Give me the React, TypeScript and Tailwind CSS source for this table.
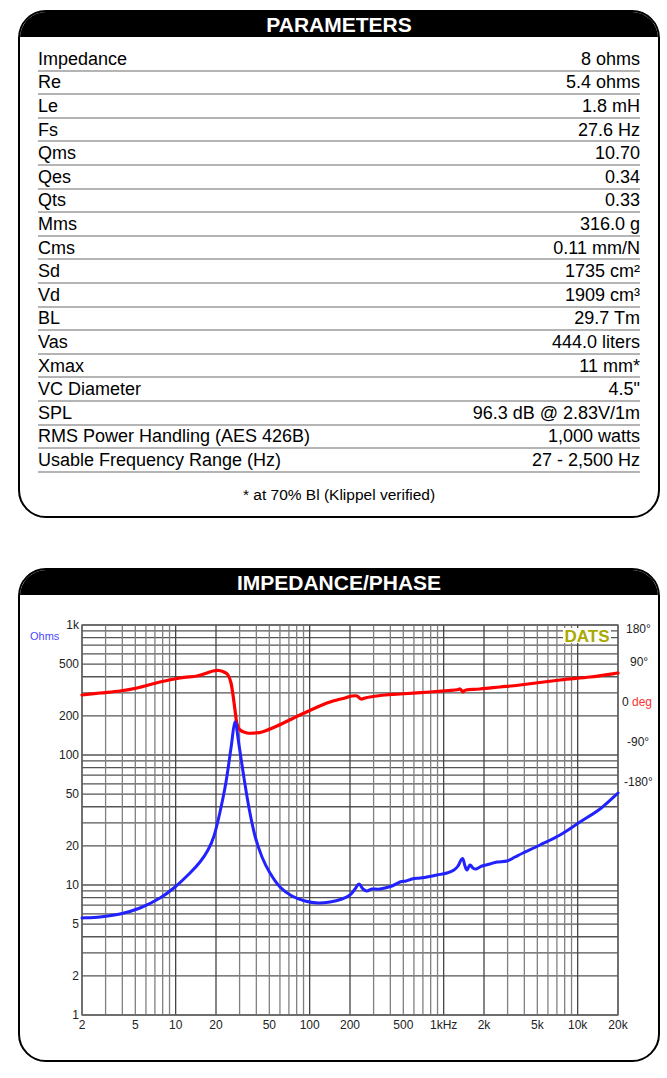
import React from "react";

const rows: [string, string][] = [
  ["Impedance", "8 ohms"],
  ["Re", "5.4 ohms"],
  ["Le", "1.8 mH"],
  ["Fs", "27.6 Hz"],
  ["Qms", "10.70"],
  ["Qes", "0.34"],
  ["Qts", "0.33"],
  ["Mms", "316.0 g"],
  ["Cms", "0.11 mm/N"],
  ["Sd", "1735 cm²"],
  ["Vd", "1909 cm³"],
  ["BL", "29.7 Tm"],
  ["Vas", "444.0 liters"],
  ["Xmax", "11 mm*"],
  ["VC Diameter", "4.5\""],
  ["SPL", "96.3 dB @ 2.83V/1m"],
  ["RMS Power Handling (AES 426B)", "1,000 watts"],
  ["Usable Frequency Range (Hz)", "27 - 2,500 Hz"],
];

// plot area in page pixels: x 82..618 (2 Hz..20 kHz), y 625..1015 (1k..1 ohm)
const fx = (f: number) => 82 + 134 * Math.log10(f / 2);
const fy = (o: number) => 1015 - 130 * Math.log10(o);

const blue: number[][] = [
  [82, 918], [100, 917], [120, 914], [140, 908], [160, 898], [175, 887], [190, 873],
  [200, 862], [208, 850], [214, 836], [220, 812], [226, 782], [231, 748], [235, 722],
  [239, 745], [244, 778], [249, 808], [255, 836], [262, 857], [270, 873], [280, 887],
  [292, 896], [305, 901], [318, 903], [330, 902], [342, 899], [350, 895], [355, 889],
  [359, 884], [363, 889], [367, 891], [372, 889], [380, 889], [392, 886], [400, 882],
  [406, 881], [412, 879], [420, 878], [427, 877], [437, 875], [447, 873], [454, 870],
  [458, 866], [461, 860], [463, 859], [465, 866], [467, 870], [470, 865], [473, 868],
  [476, 869], [482, 866], [490, 864], [497, 862], [507, 861], [515, 857], [523, 853],
  [540, 845], [560, 835], [580, 822], [600, 809], [618, 793],
];

const red: number[][] = [
  [82, 695], [100, 693], [120, 691], [137, 688], [160, 682], [180, 678], [197, 676],
  [207, 673], [213, 671], [219, 670.5], [224, 672], [228, 675], [231, 683], [233, 695],
  [235, 710], [237, 724], [240, 730], [247, 733], [255, 733], [262, 732], [277, 726],
  [300, 715], [327, 703], [345, 698], [352, 696], [357, 696], [361, 699], [365, 698],
  [370, 697], [385, 695], [400, 694], [430, 692], [455, 690], [460, 689], [463, 692],
  [466, 690], [480, 689], [500, 687], [520, 685], [560, 680], [590, 677], [618, 673],
];

function smooth(p: number[][]) {
  let d = `M${p[0][0]},${p[0][1]}`;
  for (let i = 0; i < p.length - 1; i++) {
    const a = p[i - 1] || p[i];
    const b = p[i];
    const c = p[i + 1];
    const e = p[i + 2] || c;
    const c1x = b[0] + (c[0] - a[0]) / 6;
    const c1y = b[1] + (c[1] - a[1]) / 6;
    const c2x = c[0] - (e[0] - b[0]) / 6;
    const c2y = c[1] - (e[1] - b[1]) / 6;
    d += ` C${c1x},${c1y} ${c2x},${c2y} ${c[0]},${c[1]}`;
  }
  return d;
}

const vLines: { f: number; dark: boolean }[] = [];
for (const dec of [1, 10, 100, 1000, 10000]) {
  for (let k = 1; k <= 9; k++) {
    const f = k * dec;
    if (f >= 2 && f <= 20000) vLines.push({ f, dark: k === 1 || k === 2 });
  }
}
const hLines: number[] = [];
for (const dec of [1, 10, 100]) {
  for (let k = 1; k <= 9; k++) hLines.push(k * dec);
}
hLines.push(1000);

const xLabels: [number, string][] = [
  [2, "2"], [5, "5"], [10, "10"], [20, "20"], [50, "50"], [100, "100"], [200, "200"],
  [500, "500"], [1000, "1kHz"], [2000, "2k"], [5000, "5k"], [10000, "10k"], [20000, "20k"],
];
const yLabels: [number, string][] = [
  [1000, "1k"], [500, "500"], [200, "200"], [100, "100"], [50, "50"],
  [20, "20"], [10, "10"], [5, "5"], [2, "2"], [1, "1"],
];

function Chart() {
  return (
    <svg width="638" height="465" viewBox="20 595 638 465" className="block">
      {hLines.map((o) => (
        <line key={"h" + o} x1={82} x2={618} y1={fy(o)} y2={fy(o)} stroke="#555" strokeWidth={1.3} />
      ))}
      {vLines.map((v) => (
        <line
          key={"v" + v.f}
          x1={fx(v.f)}
          x2={fx(v.f)}
          y1={625}
          y2={1015}
          stroke={v.dark ? "#444" : "#808080"}
          strokeWidth={1.3}
        />
      ))}
      <rect x={82} y={625} width={536} height={390} fill="none" stroke="#666" strokeWidth={1.3} />

      <rect x={563} y={628} width={48} height={15} fill="#fff" />
      <text x={587} y={642} textAnchor="middle" fontSize="17" fontWeight="bold" fill="#a9a900">
        DATS
      </text>

      <path d={smooth(red)} fill="none" stroke="#ff0000" strokeWidth={3.2} strokeLinejoin="round" strokeLinecap="round" />
      <path d={smooth(blue)} fill="none" stroke="#2222ff" strokeWidth={3} strokeLinejoin="round" strokeLinecap="round" />

      <text x={30} y={640} fontSize="11" fill="#4a4aff">Ohms</text>
      {yLabels.map(([o, t]) => (
        <text key={t} x={79} y={fy(o) + 4} textAnchor="end" fontSize="12" fill="#222">
          {t}
        </text>
      ))}
      {xLabels.map(([f, t]) => (
        <text key={t} x={fx(f)} y={1029} textAnchor="middle" fontSize="12" fill="#222">
          {t}
        </text>
      ))}
      <text x={626} y={633} fontSize="12" fill="#222">180°</text>
      <text x={630} y={666} fontSize="12" fill="#222">90°</text>
      <text x={622} y={706} fontSize="12" fill="#222">
        0 <tspan fill="#ff3333">deg</tspan>
      </text>
      <text x={627} y={746} fontSize="12" fill="#222">-90°</text>
      <text x={624} y={786} fontSize="12" fill="#222">-180°</text>
    </svg>
  );
}

export default function App() {
  return (
    <div className="w-[667px] bg-white pt-[10px] pb-4 font-['Liberation_Sans',Arial,sans-serif] text-black">
      <div className="ml-[18px] w-[642px] rounded-[28px] border-2 border-black overflow-hidden">
        <div className="h-[25px] bg-black flex items-center justify-center text-white font-bold text-[21px] leading-none">
          PARAMETERS
        </div>
        <div className="pt-[11px] px-[18px]">
          {rows.map(([k, v]) => (
            <div
              key={k}
              className="h-[23.6px] border-b-2 border-[#b4b4b4] flex items-center justify-between text-[18px] leading-none"
            >
              <span>{k}</span>
              <span>{v}</span>
            </div>
          ))}
        </div>
        <div className="h-[43px] flex items-center justify-center text-[15.5px]">
          * at 70% Bl (Klippel verified)
        </div>
      </div>

      <div className="mt-[50px] ml-[18px] w-[642px] rounded-[28px] border-2 border-black overflow-hidden">
        <div className="h-[25px] bg-black flex items-center justify-center text-white font-bold text-[21px] leading-none">
          IMPEDANCE/PHASE
        </div>
        <Chart />
      </div>
    </div>
  );
}
